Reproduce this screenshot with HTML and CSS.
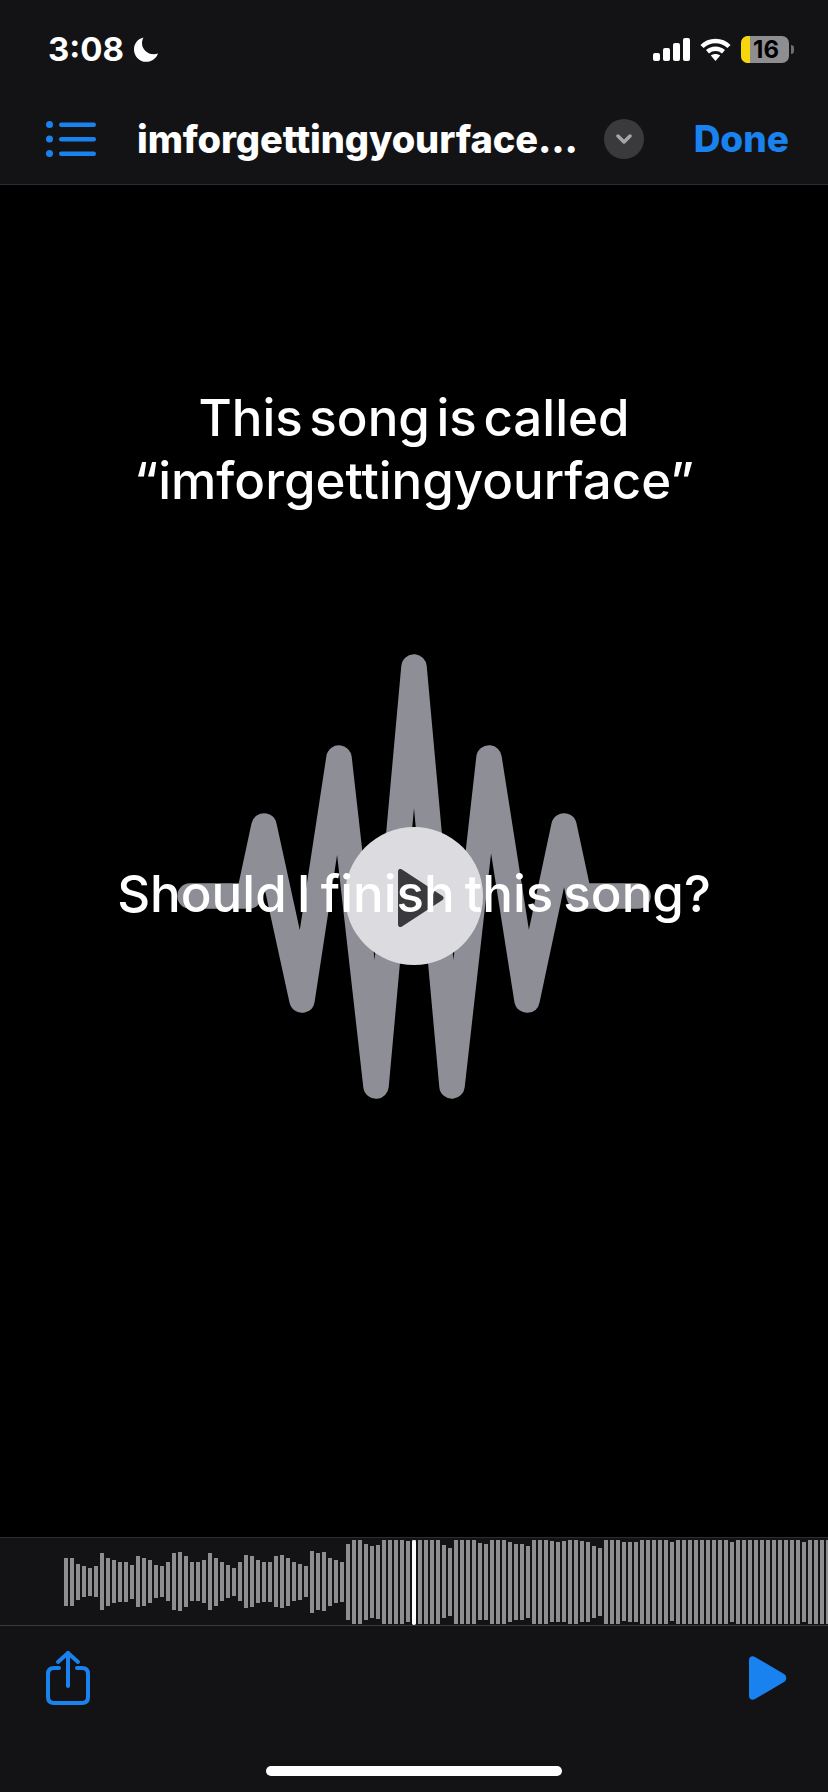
FILE: index.html
```html
<!DOCTYPE html>
<html lang="en">
<head>
    <meta charset="UTF-8">
    <title>imforgettingyourface</title>
    <link rel="stylesheet" href="styles.css">
</head>
<body>

<div class="phone">
    <header class="topbar">
        <div class="status">
            <div class="status-left">
                <span class="time">3:08</span>
                <svg class="moon" viewBox="0 0 24 25"><path d="M9.500 0.500C3.800 1.800 0 6.800 0 12.400 0 19.200 5.500 24.800 12.300 24.800c5.400 0 10-3.300 11.700-8.300-1.400.5-2.800.7-4.300.7C13.300 17.200 8 12.200 8 6.200 8 4.200 8.500 2.200 9.500.5Z"/></svg>
            </div>
            <div class="status-right">
                <svg class="signal" viewBox="0 0 37 23">
                    <rect x="0" y="15" width="7" height="8" rx="2"/>
                    <rect x="10" y="10" width="7" height="13" rx="2"/>
                    <rect x="20" y="5" width="7" height="18" rx="2"/>
                    <rect x="30" y="0" width="7" height="23" rx="2"/>
                </svg>
                <svg class="wifi" viewBox="0 0 31 23">
                    <path class="arc" d="M2 8.500C9.500 1 21.500 1 29 8.500"/>
                    <path class="arc" d="M7.500 13.800C12 9.800 19 9.800 23.500 13.800"/>
                    <path d="M10.800 17.500C13.500 15.500 17.500 15.500 20.200 17.500L15.500 23Z"/>
                </svg>
                <div class="battery">
                    <span class="battery-level"></span>
                    <span class="battery-num">16</span>
                    <span class="battery-tip"></span>
                </div>
            </div>
        </div>
        <nav class="nav">
            <svg class="list-icon" viewBox="0 0 50 36">
                <circle cx="3.500" cy="3.500" r="3.500"/>
                <circle cx="3.500" cy="18" r="3.500"/>
                <circle cx="3.500" cy="32.500" r="3.500"/>
                <rect x="13" y="1.500" width="37" height="4.500" rx="2.200"/>
                <rect x="13" y="16" width="37" height="4.500" rx="2.200"/>
                <rect x="13" y="30.500" width="37" height="4.500" rx="2.200"/>
            </svg>
            <span class="nav-title">imforgettingyourface...</span>
            <span class="chevron-btn">
                <svg viewBox="0 0 16 10"><path d="M2 2l6 6 6-6"/></svg>
            </span>
            <span class="done">Done</span>
        </nav>
    </header>

    <main class="video">
        <p class="caption">This song is called<br>“imforgettingyourface”</p>
        <div class="stage">
            <svg class="wave" viewBox="0 640 828 470">
                <polyline points="190,896 249,896 264,826 302,1000 339,758 376,1086 414,667 452,1086 489,758 527,1000 564,826 579,896 638,896"/>
            </svg>
            <div class="play-circle">
                <svg viewBox="0 0 46 58"><path d="M0 3C0 0 2-1 4 .5L44.500 27C46 28 46 30 44.500 31L4 57.500C2 59 0 58 0 55Z"/></svg>
            </div>
            <p class="question">Should I finish this song?</p>
        </div>
    </main>

    <section class="timeline">
        <div class="bars" id="bars"></div>
        <span class="playhead"></span>
    </section>

    <footer class="toolbar">
        <div class="tools">
            <svg class="share" viewBox="0 0 46 56">
                <path d="M14 18H9C5 18 3 20 3 24V47C3 51 5 53 9 53H37C41 53 43 51 43 47V24C43 20 41 18 37 18H32"/>
                <path d="M23 36V3"/>
                <path d="M13 12L23 3L33 12"/>
            </svg>
            <svg class="play-small" viewBox="0 0 38 44"><path d="M0 4C0 1 3-1 6 1L35 18C38 20 38 24 35 26L6 43C3 45 0 43 0 40Z"/></svg>
        </div>
        <div class="home-bar"></div>
    </footer>
</div>

<script src="bars.js"></script>
</body>
</html>
```

FILE: styles.css
```css
* {
    box-sizing: border-box;
}
body {
    margin: 0;
    background: #000;
    font-family: Inter, 'Liberation Sans', sans-serif;
    color: #fff;
}
.phone {
    width: 828px;
    height: 1792px;
    display: flex;
    flex-direction: column;
    overflow: hidden;
}

/* top */
.topbar {
    background: #131315;
    border-bottom: 1px solid #2c2c2e;
    height: 185px;
}
.status {
    height: 85px;
    padding: 36px 39px 0 48px;
    display: flex;
    justify-content: space-between;
    align-items: flex-start;
}
.status-left {
    display: flex;
    align-items: center;
    gap: 10px;
}
.time {
    font-size: 33px;
    font-weight: 700;
    line-height: 27px;
}
.moon {
    width: 24px;
    height: 25px;
    fill: #fff;
}
.status-right {
    display: flex;
    align-items: center;
    gap: 10px;
}
.signal {
    width: 37px;
    height: 23px;
    fill: #fff;
}
.wifi {
    width: 31px;
    height: 23px;
    fill: #fff;
}
.wifi .arc {
    fill: none;
    stroke: #fff;
    stroke-width: 4.500;
}
.battery {
    position: relative;
    width: 48px;
    height: 27px;
    background: #8e8e90;
    border-radius: 7px;
    display: flex;
    align-items: center;
    justify-content: center;
}
.battery-level {
    position: absolute;
    left: 0;
    top: 0;
    bottom: 0;
    width: 9px;
    background: #f7d70c;
    border-radius: 7px 0 0 7px;
}
.battery-num {
    position: relative;
    color: #000;
    font-size: 24px;
    font-weight: 700;
    line-height: 1;
    margin-left: 2px;
}
.battery-tip {
    position: absolute;
    right: -5px;
    top: 9px;
    width: 3px;
    height: 9px;
    background: #6e6e70;
    border-radius: 0 3px 3px 0;
}
.nav {
    height: 99px;
    padding: 8px 39px 0 46px;
    display: flex;
    align-items: center;
}
.list-icon {
    width: 50px;
    height: 36px;
    fill: #1a82ee;
    flex: none;
}
.nav-title {
    margin-left: 41px;
    width: 467px;
    font-size: 38px;
    font-weight: 800;
    letter-spacing: -0.1px;
    white-space: nowrap;
}
.chevron-btn {
    width: 40px;
    height: 40px;
    border-radius: 50%;
    background: #3a3a3c;
    display: flex;
    align-items: center;
    justify-content: center;
    flex: none;
}
.chevron-btn svg {
    width: 16px;
    height: 10px;
    fill: none;
    stroke: #a5a5aa;
    stroke-width: 3.500;
    stroke-linecap: round;
    stroke-linejoin: round;
}
.done {
    margin-left: auto;
    font-size: 37px;
    font-weight: 800;
    color: #1a82ee;
}

/* video frame */
.video {
    flex: 1;
    background: #000;
    padding-top: 201px;
}
.caption {
    margin: 0;
    font-size: 51px;
    font-weight: 500;
    line-height: 63px;
    word-spacing: -7px;
    text-align: center;
}
.stage {
    position: relative;
    height: 470px;
    margin-top: 128px;
}
.wave {
    display: block;
    width: 828px;
    height: 470px;
}
.wave polyline {
    fill: none;
    stroke: #8e8e96;
    stroke-width: 25.500;
    stroke-linecap: round;
    stroke-linejoin: round;
}
.play-circle {
    position: absolute;
    left: 345px;
    top: 187px;
    width: 138px;
    height: 138px;
    border-radius: 50%;
    background: #dcdce0;
}
.play-circle svg {
    position: absolute;
    left: 53px;
    top: 42px;
    width: 46px;
    height: 58px;
    fill: #3a3a3c;
}
.question {
    position: absolute;
    left: 0;
    right: 0;
    top: 222px;
    margin: 0;
    font-size: 51px;
    font-weight: 500;
    line-height: 63px;
    word-spacing: -3.500px;
    text-align: center;
}

/* waveform strip */
.timeline {
    position: relative;
    height: 89px;
    background: #131315;
    border-top: 1px solid #2c2c2e;
    border-bottom: 1px solid #3a3a3c;
    overflow: hidden;
}
.bars {
    height: 100%;
    padding-left: 64px;
    display: flex;
    align-items: center;
    gap: 2.500px;
}
.bar {
    flex: none;
    width: 3.500px;
    background: #8e8e90;
}
.playhead {
    position: absolute;
    left: 412px;
    top: 2px;
    bottom: 0;
    width: 4px;
    background: #fff;
    border-radius: 2px;
}

/* bottom */
.toolbar {
    height: 166px;
    background: #131315;
}
.tools {
    height: 140px;
    padding: 24px 41px 0 45px;
    display: flex;
    justify-content: space-between;
    align-items: flex-start;
}
.share {
    width: 46px;
    height: 56px;
    fill: none;
    stroke: #1a82ee;
    stroke-width: 4;
    stroke-linecap: round;
    stroke-linejoin: round;
}
.play-small {
    width: 38px;
    height: 44px;
    margin-top: 6px;
    fill: #1a82ee;
}
.home-bar {
    width: 296px;
    height: 10px;
    margin: 0 auto;
    background: #fff;
    border-radius: 5px;
}
```

FILE: bars.js
```js
// bar heights read left to right, the strip runs off the right edge
const heights = [
    48, 48, 36, 31, 28, 31, 57, 48, 43, 40, 40, 34, 51, 48, 43, 33, 31, 39, 57, 59,
    51, 39, 39, 43, 57, 48, 39, 33, 28, 39, 53, 51, 43, 40, 40, 51, 53, 48, 39, 36,
    31, 62, 57, 59, 48, 43, 40, 76, 84, 84, 76, 72, 74, 84, 84, 84, 84, 81, 84,
    84, 84, 84, 84, 73, 68, 84, 84, 84, 84, 77, 76, 84, 84, 84, 80, 76, 76, 72,
    84, 84, 84, 81, 80, 81, 84, 84, 81, 80, 72, 68, 84, 84, 84, 79, 80, 80, 84, 84,
    84, 84, 84, 79, 84, 84, 84, 84, 84, 84, 84, 84, 84, 80, 84, 84, 84, 84, 84, 84,
    84, 84, 84, 84, 84, 80, 84, 84, 84, 84, 84
];

const holder = document.getElementById('bars');
heights.forEach(h => {
    const bar = document.createElement('span');
    bar.className = 'bar';
    bar.style.height = h + 'px';
    holder.appendChild(bar);
});
```
